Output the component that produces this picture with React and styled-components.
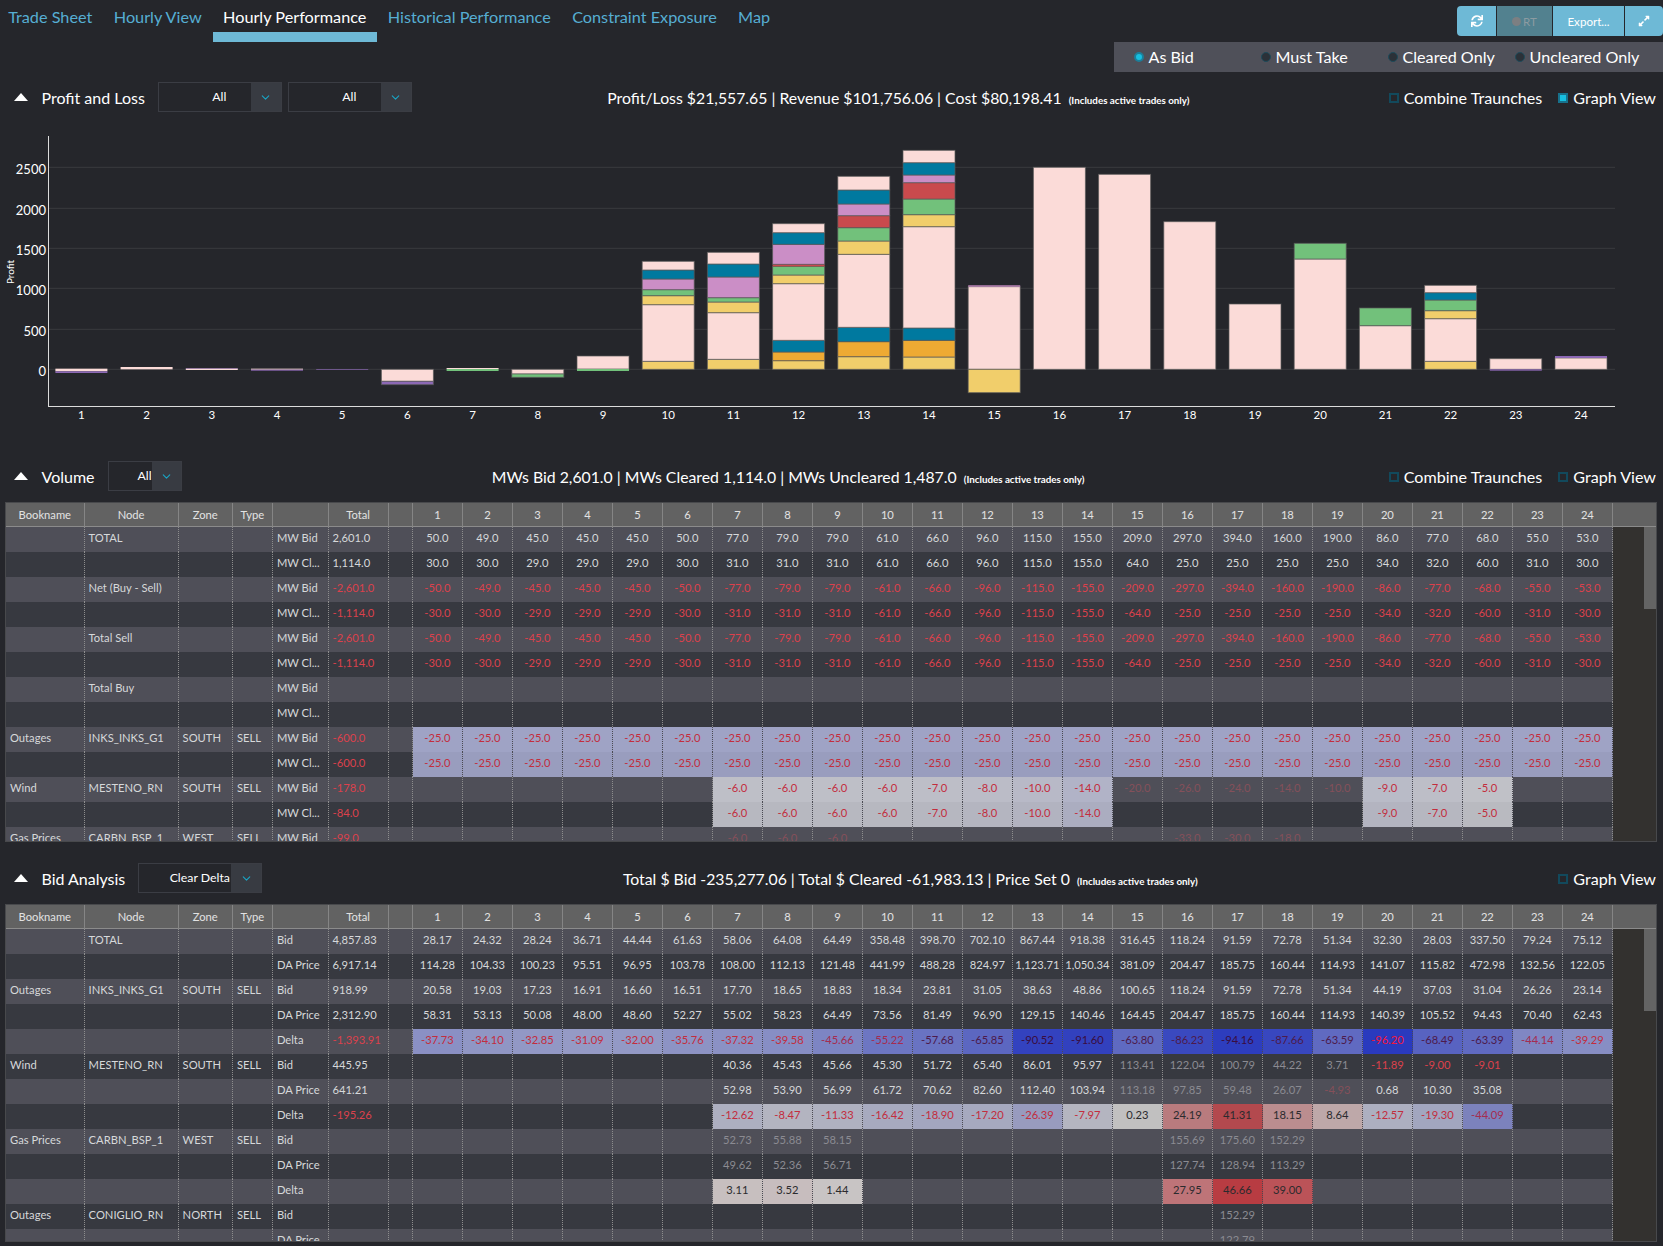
import React from "react";
import styled, { createGlobalStyle } from "styled-components";
import { FaSync, FaExpandAlt } from "react-icons/fa";
import { ChevronDown } from "lucide-react";

const GlobalStyle = createGlobalStyle`
  html, body {
    margin: 0;
    padding: 0;
    background: #25262b;
    overflow: hidden;
  }
  body {
    font-family: Lato, "Open Sans", sans-serif;
    color: #fff;
  }
  * { box-sizing: border-box; }
`;

const Page = styled.div`
  width: 1663px;
  height: 1246px;
  overflow: hidden;
`;

const Nav = styled.div`
  display: flex;
  justify-content: space-between;
  height: 42px;
`;

const Tabs = styled.div`
  display: flex;
  gap: 1px;
  margin-left: -2px;
`;

const Tab = styled.div`
  height: 42px;
  padding: 7px 10.2px 0;
  font-size: 16.25px;
  line-height: 20px;
  color: ${(p) => (p.$active ? "#fff" : "#56aed3")};
  border-bottom: 10px solid ${(p) => (p.$active ? "#6eb9d6" : "transparent")};
`;

const ButtonGroup = styled.div`
  display: flex;
  gap: 1px;
  margin-top: 6px;
  height: 30px;
  border-radius: 4px;
  overflow: hidden;
`;

const ToolButton = styled.div`
  display: flex;
  align-items: center;
  justify-content: center;
  gap: 2px;
  width: ${(p) => p.$width}px;
  background: ${(p) => (p.$off ? "#52818f" : "#6eb9d6")};
  color: ${(p) => (p.$off ? "#8c9ba1" : "#fff")};
  font-size: 11.6px;
`;

const RecDot = styled.span`
  width: 9px;
  height: 9px;
  border-radius: 50%;
  background: #7c7f82;
`;

const RadioBar = styled.div`
  display: grid;
  grid-template-columns: repeat(4, 127px);
  align-items: center;
  width: 549px;
  height: 30px;
  margin-left: auto;
  padding: 0 0 2px 20px;
  background: #4f5059;
`;

const Radio = styled.div`
  display: flex;
  align-items: center;
  gap: 4.5px;
  font-size: 16.15px;
`;

const RadioDot = styled.span`
  width: 10px;
  height: 10px;
  margin-top: 2px;
  border-radius: 50%;
  background: ${(p) => (p.$on ? "#17bfe0" : "#2b3138")};
  border: ${(p) => (p.$on ? "2px solid #1c7f9a" : "1px solid #1d4a5a")};
`;

const SectionHeader = styled.div`
  display: flex;
  align-items: center;
  height: 30px;
  padding: 0 7px 0 14px;
  margin-top: ${(p) => p.$top}px;
`;

const Triangle = styled.span`
  width: 0;
  height: 0;
  border-left: 7px solid transparent;
  border-right: 7px solid transparent;
  border-bottom: 8px solid #fff;
`;

const Title = styled.div`
  margin: 1px 13px 0 13.5px;
  font-size: 16px;
`;

const Select = styled.div`
  display: flex;
  height: 30px;
  width: ${(p) => p.$width}px;
  border: 1px solid #3b3d44;
  margin-right: 6px;
`;

const SelectValue = styled.div`
  flex: 1;
  padding-left: 29px;
  text-align: center;
  font-size: 12.3px;
  line-height: 28px;
  white-space: nowrap;
`;

const SelectArrow = styled.div`
  display: flex;
  align-items: center;
  justify-content: center;
  width: 30px;
  background: #383b42;
  color: #19a4c4;
`;

const Summary = styled.div`
  flex: 1;
  margin-top: 1px;
  padding-right: ${(p) => p.$nudge}px;
  text-align: center;
  font-size: 15.8px;
  white-space: nowrap;
`;

const SummaryNote = styled.span`
  margin-left: 7px;
  font-size: 9.8px;
  font-weight: 700;
`;

const Options = styled.div`
  display: flex;
  align-items: center;
  gap: 16px;
  margin-top: 1px;
`;

const Check = styled.div`
  display: flex;
  align-items: center;
  gap: 5px;
  font-size: 16.1px;
`;

const CheckBox = styled.span`
  width: 10px;
  height: 10px;
  background: ${(p) => (p.$on ? "#17bfe0" : "transparent")};
  border: 2px solid ${(p) => (p.$on ? "#17718c" : "#12495c")};
`;

const TableFrame = styled.div`
  width: 1652px;
  height: ${(p) => p.$height}px;
  margin: 11px 0 0 5px;
  border: 1px solid #48494c;
  display: flex;
  flex-direction: column;
  overflow: hidden;
  font-size: 11.2px;
`;

const COLUMNS = "78.6px 94px 54.3px 40px 55.7px 60px 24.3px repeat(24, 50px)";

const HeaderRow = styled.div`
  display: grid;
  grid-template-columns: ${COLUMNS} 1fr;
  flex: none;
  height: 24px;
  background: #626262;
  border-bottom: 1px solid #8b8b8b;
`;

const HeaderCell = styled.div`
  text-align: center;
  line-height: 24px;
  color: #e2e2e2;
  border-right: 1px solid #858585;
  &:last-child { border-right: 0; }
`;

const TableBody = styled.div`
  flex: 1;
  display: flex;
  min-height: 0;
  overflow: hidden;
`;

const Rows = styled.div`
  flex: none;
`;

const Gutter = styled.div`
  flex: 1;
  display: flex;
  justify-content: flex-end;
  background: #33312f;
`;

const Thumb = styled.div`
  width: 12px;
  height: 82px;
  background: #646464;
`;

const Row = styled.div`
  display: grid;
  grid-template-columns: ${COLUMNS};
  height: 25px;
  background: ${(p) => (p.$odd ? "#4f4f58" : "#373940")};
`;

const cellColor = (p) => {
  if (p.$tone === "dim") return "#8b8b92";
  if (p.$tone === "dimRed") return "#85505a";
  if (p.$tone === "red") return "#dc414c";
  return "#d6d8da";
};

const Cell = styled.div`
  padding: 0 4px;
  line-height: 22px;
  white-space: nowrap;
  overflow: hidden;
  color: ${cellColor};
  border-right: 1px dotted #8d8d8d;
`;

const HourCell = styled.div`
  text-align: center;
  line-height: 22px;
  white-space: nowrap;
  color: ${cellColor};
  border-right: 1px dotted ${(p) => (p.$heated ? "#4a4a52" : "#8d8d8d")};
`;

// colours of the stacked bars
const C = {
  p: "#fbdbd8",
  b: "#00799f",
  o: "#cb8ec6",
  r: "#c94a4d",
  g: "#72c17b",
  y: "#f1ce6b",
  a: "#eeaa33",
  v: "#8c68b5",
};

// each hour: colour key with top and bottom of the segment, chart scale
const BARS = [
  [["p", 716, 724], ["v", 724, 729]],
  [["p", 711, 718]],
  [["v", 714, 716], ["p", 716, 720]],
  [["p", 716, 719], ["v", 719, 722]],
  [["v", 717, 719]],
  [["p", 718, 754], ["v", 754, 764]],
  [["p", 714, 717], ["g", 717, 723]],
  [["p", 718, 732], ["g", 732, 742]],
  [["p", 678, 717], ["g", 717, 723]],
  [["y", 694, 718], ["p", 524, 694], ["y", 497, 524], ["g", 479, 497], ["o", 447, 479], ["b", 420, 447], ["p", 394, 420]],
  [["y", 688, 718], ["p", 548, 688], ["y", 516, 548], ["g", 503, 516], ["o", 441, 503], ["b", 402, 441], ["p", 367, 402]],
  [["y", 692, 718], ["a", 666, 692], ["b", 631, 666], ["p", 461, 631], ["y", 435, 461], ["g", 409, 435], ["r", 403, 409], ["o", 343, 403], ["b", 308, 343], ["p", 281, 308]],
  [["y", 680, 718], ["a", 635, 680], ["b", 592, 635], ["p", 373, 592], ["y", 333, 373], ["g", 293, 333], ["r", 257, 293], ["o", 222, 257], ["b", 180, 222], ["p", 139, 180]],
  [["y", 681, 718], ["a", 631, 681], ["b", 594, 631], ["p", 290, 594], ["y", 254, 290], ["g", 207, 254], ["r", 158, 207], ["o", 135, 158], ["b", 98, 135], ["p", 61, 98]],
  [["p", 470, 718], ["o", 466, 470], ["y", 718, 788]],
  [["p", 112, 718]],
  [["p", 133, 718]],
  [["p", 275, 718]],
  [["p", 522, 718]],
  [["p", 387, 718], ["g", 340, 387]],
  [["p", 587, 718], ["g", 534, 587]],
  [["y", 694, 718], ["p", 566, 694], ["y", 542, 566], ["g", 510, 542], ["b", 488, 510], ["p", 466, 488]],
  [["p", 686, 718], ["v", 718, 722]],
  [["p", 684, 718], ["v", 678, 684]],
];

const toY = (v) => 18 + v / 3;
const GRID = [
  [2500, 55.3],
  [2000, 96.3],
  [1500, 136.3],
  [1000, 176.3],
  [500, 217.3],
  [0, 257.3],
];

function ProfitChart() {
  return (
    <svg width="1663" height="320" style={{ display: "block" }}>
      {GRID.map(([label, y]) => (
        <g key={label}>
          <line x1="48" x2="1615" y1={y} y2={y} stroke="#3a3b3f" />
          <text x="46" y={y + 7} textAnchor="end" fill="#fff" fontSize="13">
            {label}
          </text>
        </g>
      ))}
      <line x1="48.5" x2="48.5" y1="24" y2="294.5" stroke="#dcdcdc" />
      <line x1="48" x2="1615" y1="294.5" y2="294.5" stroke="#dcdcdc" />
      <text
        transform="translate(14 160) rotate(-90)"
        textAnchor="middle"
        fill="#fff"
        fontSize="10"
      >
        Profit
      </text>
      {BARS.map((segments, i) => {
        const x = 55.4 + i * 65.2;
        return (
          <g key={i}>
            {segments.map(([color, top, bottom]) => {
              const h = (bottom - top) / 3;
              return (
                <rect
                  key={`${color}${top}`}
                  x={x}
                  y={toY(top)}
                  width="52"
                  height={h}
                  fill={C[color]}
                  stroke={h < 3 ? "none" : "rgba(90,90,90,0.7)"}
                  strokeWidth="1"
                />
              );
            })}
            <text
              x={x + 26}
              y="307"
              textAnchor="middle"
              fill="#fff"
              fontSize="11.5"
            >
              {i + 1}
            </text>
          </g>
        );
      })}
    </svg>
  );
}

const mix = (from, to, t) =>
  from.map((c, i) => Math.round(c + (to[i] - c) * t));

function heatColor(value, odd) {
  const grey = [200, 200, 200];
  const rgb =
    value < 0
      ? mix(grey, [42, 58, 190], Math.min(-value / 96.2, 1))
      : mix(grey, [184, 60, 66], Math.min(value / 46.66, 1));
  const shade = odd ? 1 : 0.965;
  return `rgb(${rgb.map((c) => Math.round(c * shade)).join(",")})`;
}

function heatText(value) {
  if (value >= 0) return "#2b2b2e";
  if (value <= -96) return "#f2173c";
  if (value <= -90) return "#3a0c40";
  if (value <= -56) return "#4d1a4c";
  if (value <= -44) return "#a52c50";
  return "#c32d3d";
}

const list = (s) => s.trim().split(/\s+/);
const neg = (s) =>
  list(s)
    .map((v) => `-${v}`)
    .join(" ");
const blank = Array(24).fill("_").join(" ");
const rpt = (v) => Array(24).fill(v).join(" ");

const BID = "50.0 49.0 45.0 45.0 45.0 50.0 77.0 79.0 79.0 61.0 66.0 96.0 115.0 155.0 209.0 297.0 394.0 160.0 190.0 86.0 77.0 68.0 55.0 53.0";
const CLR = "30.0 30.0 29.0 29.0 29.0 30.0 31.0 31.0 31.0 61.0 66.0 96.0 115.0 155.0 64.0 25.0 25.0 25.0 25.0 34.0 32.0 60.0 31.0 30.0";

const VOLUME = [
  { node: "TOTAL", label: "MW Bid", total: "2,601.0", hours: BID },
  { label: "MW Cl...", total: "1,114.0", hours: CLR },
  { node: "Net (Buy - Sell)", label: "MW Bid", total: "-2,601.0", hours: neg(BID) },
  { label: "MW Cl...", total: "-1,114.0", hours: neg(CLR) },
  { node: "Total Sell", label: "MW Bid", total: "-2,601.0", hours: neg(BID) },
  { label: "MW Cl...", total: "-1,114.0", hours: neg(CLR) },
  { node: "Total Buy", label: "MW Bid", hours: blank },
  { label: "MW Cl...", hours: blank },
  { book: "Outages", node: "INKS_INKS_G1", zone: "SOUTH", type: "SELL", label: "MW Bid", total: "-600.0", hours: rpt("-25.0"), heat: true },
  { label: "MW Cl...", total: "-600.0", hours: rpt("-25.0"), heat: true },
  {
    book: "Wind", node: "MESTENO_RN", zone: "SOUTH", type: "SELL", label: "MW Bid", total: "-178.0", heat: true,
    hours: "_ _ _ _ _ _ -6.0 -6.0 -6.0 -6.0 -7.0 -8.0 -10.0 -14.0 ~-20.0 ~-26.0 ~-24.0 ~-14.0 ~-10.0 -9.0 -7.0 -5.0 _ _",
  },
  {
    label: "MW Cl...", total: "-84.0", heat: true,
    hours: "_ _ _ _ _ _ -6.0 -6.0 -6.0 -6.0 -7.0 -8.0 -10.0 -14.0 _ _ _ _ _ -9.0 -7.0 -5.0 _ _",
  },
  {
    book: "Gas Prices", node: "CARBN_BSP_1", zone: "WEST", type: "SELL", label: "MW Bid", total: "-99.0",
    hours: "_ _ _ _ _ _ ~-6.0 ~-6.0 ~-6.0 _ _ _ _ _ _ ~-33.0 ~-30.0 ~-18.0 _ _ _ _ _ _",
  },
];

const ANALYSIS = [
  {
    node: "TOTAL", label: "Bid", total: "4,857.83",
    hours: "28.17 24.32 28.24 36.71 44.44 61.63 58.06 64.08 64.49 358.48 398.70 702.10 867.44 918.38 316.45 118.24 91.59 72.78 51.34 32.30 28.03 337.50 79.24 75.12",
  },
  {
    label: "DA Price", total: "6,917.14",
    hours: "114.28 104.33 100.23 95.51 96.95 103.78 108.00 112.13 121.48 441.99 488.28 824.97 1,123.71 1,050.34 381.09 204.47 185.75 160.44 114.93 141.07 115.82 472.98 132.56 122.05",
  },
  {
    book: "Outages", node: "INKS_INKS_G1", zone: "SOUTH", type: "SELL", label: "Bid", total: "918.99",
    hours: "20.58 19.03 17.23 16.91 16.60 16.51 17.70 18.65 18.83 18.34 23.81 31.05 38.63 48.86 100.65 118.24 91.59 72.78 51.34 44.19 37.03 31.04 26.26 23.14",
  },
  {
    label: "DA Price", total: "2,312.90",
    hours: "58.31 53.13 50.08 48.00 48.60 52.27 55.02 58.23 64.49 73.56 81.49 96.90 129.15 140.46 164.45 204.47 185.75 160.44 114.93 140.39 105.52 94.43 70.40 62.43",
  },
  {
    label: "Delta", total: "-1,393.91", heat: true,
    hours: "-37.73 -34.10 -32.85 -31.09 -32.00 -35.76 -37.32 -39.58 -45.66 -55.22 -57.68 -65.85 -90.52 -91.60 -63.80 -86.23 -94.16 -87.66 -63.59 -96.20 -68.49 -63.39 -44.14 -39.29",
  },
  {
    book: "Wind", node: "MESTENO_RN", zone: "SOUTH", type: "SELL", label: "Bid", total: "445.95",
    hours: "_ _ _ _ _ _ 40.36 45.43 45.66 45.30 51.72 65.40 86.01 95.97 ~113.41 ~122.04 ~100.79 ~44.22 ~3.71 -11.89 -9.00 -9.01 _ _",
  },
  {
    label: "DA Price", total: "641.21",
    hours: "_ _ _ _ _ _ 52.98 53.90 56.99 61.72 70.62 82.60 112.40 103.94 ~113.18 ~97.85 ~59.48 ~26.07 ~-4.93 0.68 10.30 35.08 _ _",
  },
  {
    label: "Delta", total: "-195.26", heat: true,
    hours: "_ _ _ _ _ _ -12.62 -8.47 -11.33 -16.42 -18.90 -17.20 -26.39 -7.97 0.23 24.19 41.31 18.15 8.64 -12.57 -19.30 -44.09 _ _",
  },
  {
    book: "Gas Prices", node: "CARBN_BSP_1", zone: "WEST", type: "SELL", label: "Bid",
    hours: "_ _ _ _ _ _ ~52.73 ~55.88 ~58.15 _ _ _ _ _ _ ~155.69 ~175.60 ~152.29 _ _ _ _ _ _",
  },
  {
    label: "DA Price",
    hours: "_ _ _ _ _ _ ~49.62 ~52.36 ~56.71 _ _ _ _ _ _ ~127.74 ~128.94 ~113.29 _ _ _ _ _ _",
  },
  {
    label: "Delta", heat: true,
    hours: "_ _ _ _ _ _ 3.11 3.52 1.44 _ _ _ _ _ _ 27.95 46.66 39.00 _ _ _ _ _ _",
  },
  {
    book: "Outages", node: "CONIGLIO_RN", zone: "NORTH", type: "SELL", label: "Bid",
    hours: "_ _ _ _ _ _ _ _ _ _ _ _ _ _ _ _ ~152.29 _ _ _ _ _ _ _",
  },
  {
    label: "DA Price",
    hours: "_ _ _ _ _ _ _ _ _ _ _ _ _ _ _ _ ~122.79 _ _ _ _ _ _ _",
  },
];

function Hour({ raw, heat, odd }) {
  if (raw === "_") return <HourCell />;
  const dim = raw.startsWith("~");
  const text = dim ? raw.slice(1) : raw;
  const isNeg = text.startsWith("-");
  if (heat && !dim) {
    const value = parseFloat(text);
    return (
      <HourCell
        $heated
        style={{ background: heatColor(value, odd), color: heatText(value) }}
      >
        {text}
      </HourCell>
    );
  }
  const tone = dim ? (isNeg ? "dimRed" : "dim") : isNeg ? "red" : undefined;
  return <HourCell $tone={tone}>{text}</HourCell>;
}

function DataTable({ rows, height }) {
  return (
    <TableFrame $height={height}>
      <HeaderRow>
        {["Bookname", "Node", "Zone", "Type", "", "Total", ""].map((h, i) => (
          <HeaderCell key={i}>{h}</HeaderCell>
        ))}
        {Array.from({ length: 24 }, (_, i) => (
          <HeaderCell key={`h${i}`}>{i + 1}</HeaderCell>
        ))}
        <HeaderCell />
      </HeaderRow>
      <TableBody>
        <Rows>
          {rows.map((row, i) => {
            const odd = i % 2 === 0;
            return (
              <Row key={i} $odd={odd}>
                <Cell>{row.book}</Cell>
                <Cell>{row.node}</Cell>
                <Cell>{row.zone}</Cell>
                <Cell>{row.type}</Cell>
                <Cell>{row.label}</Cell>
                <Cell $tone={row.total && row.total[0] === "-" ? "red" : undefined}>
                  {row.total}
                </Cell>
                <Cell />
                {list(row.hours).map((raw, h) => (
                  <Hour key={h} raw={raw} heat={row.heat} odd={odd} />
                ))}
              </Row>
            );
          })}
        </Rows>
        <Gutter>
          <Thumb />
        </Gutter>
      </TableBody>
    </TableFrame>
  );
}

function Dropdown({ value, width }) {
  return (
    <Select $width={width}>
      <SelectValue>{value}</SelectValue>
      <SelectArrow>
        <ChevronDown size={13} strokeWidth={2} />
      </SelectArrow>
    </Select>
  );
}

export default function App() {
  return (
    <Page>
      <GlobalStyle />
      <Nav>
        <Tabs>
          <Tab>Trade Sheet</Tab>
          <Tab>Hourly View</Tab>
          <Tab $active>Hourly Performance</Tab>
          <Tab>Historical Performance</Tab>
          <Tab>Constraint Exposure</Tab>
          <Tab>Map</Tab>
        </Tabs>
        <ButtonGroup>
          <ToolButton $width={39}>
            <FaSync size={12} />
          </ToolButton>
          <ToolButton $width={55} $off>
            <RecDot />
            RT
          </ToolButton>
          <ToolButton $width={71}>Export...</ToolButton>
          <ToolButton $width={38}>
            <FaExpandAlt size={12} />
          </ToolButton>
        </ButtonGroup>
      </Nav>
      <RadioBar>
        <Radio>
          <RadioDot $on />
          As Bid
        </Radio>
        <Radio>
          <RadioDot />
          Must Take
        </Radio>
        <Radio>
          <RadioDot />
          Cleared Only
        </Radio>
        <Radio>
          <RadioDot />
          Uncleared Only
        </Radio>
      </RadioBar>

      <SectionHeader $top={10}>
        <Triangle />
        <Title>Profit and Loss</Title>
        <Dropdown value="All" width={124} />
        <Dropdown value="All" width={124} />
        <Summary $nudge={10}>
          Profit/Loss $21,557.65 | Revenue $101,756.06 | Cost $80,198.41
          <SummaryNote>(Includes active trades only)</SummaryNote>
        </Summary>
        <Options>
          <Check>
            <CheckBox />
            Combine Traunches
          </Check>
          <Check>
            <CheckBox $on />
            Graph View
          </Check>
        </Options>
      </SectionHeader>
      <ProfitChart />

      <SectionHeader $top={29}>
        <Triangle />
        <Title>Volume</Title>
        <Dropdown value="All" width={74} />
        <Summary $nudge={0}>
          MWs Bid 2,601.0 | MWs Cleared 1,114.0 | MWs Uncleared 1,487.0
          <SummaryNote>(Includes active trades only)</SummaryNote>
        </Summary>
        <Options>
          <Check>
            <CheckBox />
            Combine Traunches
          </Check>
          <Check>
            <CheckBox />
            Graph View
          </Check>
        </Options>
      </SectionHeader>
      <DataTable rows={VOLUME} height={340} />

      <SectionHeader $top={21}>
        <Triangle />
        <Title>Bid Analysis</Title>
        <Dropdown value="Clear Delta" width={124} />
        <Summary $nudge={6}>
          Total $ Bid -235,277.06 | Total $ Cleared -61,983.13 | Price Set 0
          <SummaryNote>(Includes active trades only)</SummaryNote>
        </Summary>
        <Options>
          <Check>
            <CheckBox />
            Graph View
          </Check>
        </Options>
      </SectionHeader>
      <DataTable rows={ANALYSIS} height={338} />
    </Page>
  );
}
